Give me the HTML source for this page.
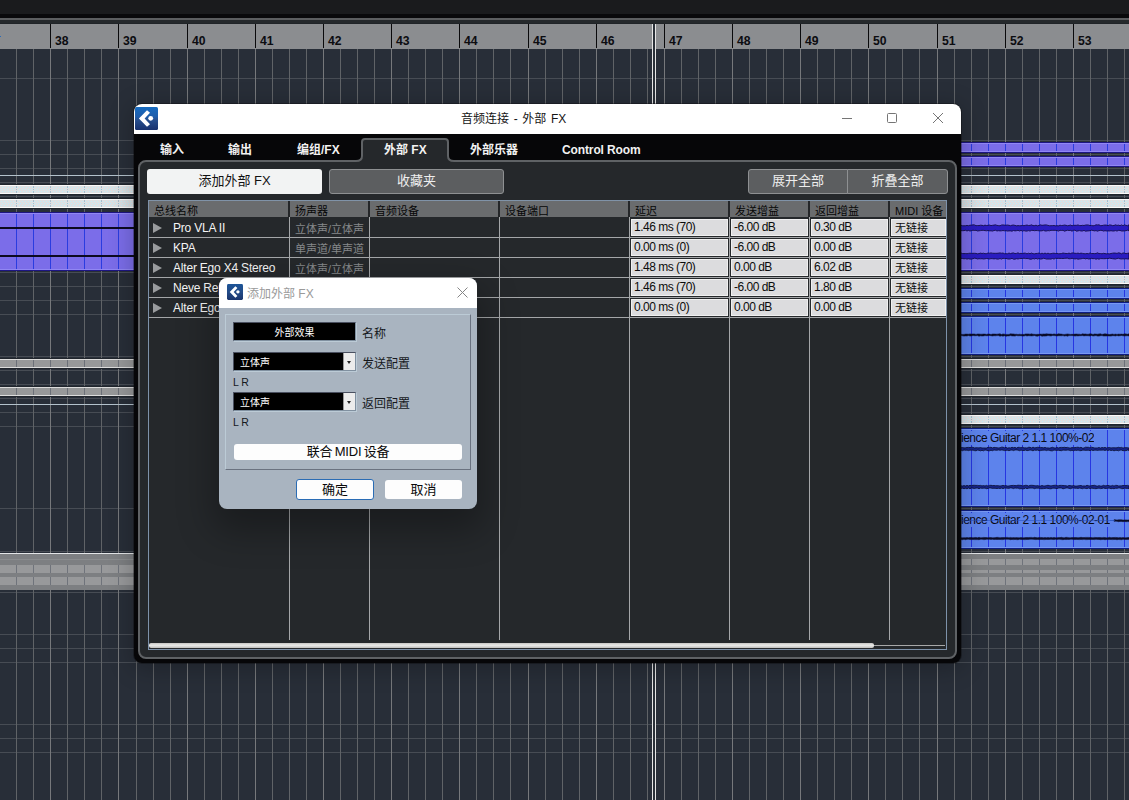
<!DOCTYPE html>
<html lang="zh-CN"><head><meta charset="utf-8"><title>音频连接 - 外部 FX</title>
<style>
html,body{margin:0;padding:0;background:#282e38;}
body{width:1129px;height:800px;overflow:hidden;position:relative;font-family:"Liberation Sans","Noto Sans CJK SC",sans-serif;}
.bg{position:absolute;left:0;top:0;display:block}
.rl{position:absolute;top:34px;font-size:12.2px;font-weight:bold;color:#0c0c10;line-height:14px;letter-spacing:0px}
.cliptxt{position:absolute;font-size:12px;color:#0a0a14;white-space:nowrap;line-height:14px;overflow:hidden;letter-spacing:-0.5px;background:#5d83ec}
#dlg{position:absolute;left:134px;top:104px;width:827px;height:559px;background:#060608;border-radius:8px;overflow:hidden;box-shadow:0 4px 24px 2px rgba(0,0,0,.24),0 0 0 1px rgba(10,10,12,.35)}
#dlg .tb{position:absolute;left:0;top:0;right:0;height:30px;background:#fff}
#dlg .title{position:absolute;left:327px;top:7px;word-spacing:1.3px;font-size:12px;line-height:16px;color:#151515;white-space:nowrap}
.logo{position:absolute}
.tab{position:absolute;top:39px;font-size:12px;font-weight:bold;color:#f2f2f2;line-height:14px;white-space:nowrap}
#panel{position:absolute;left:4px;top:56px;width:815px;height:495px;border:2px solid #5f6265;border-radius:8px;background:#25282b}
#atab{position:absolute;left:227px;top:34px;width:84px;height:26px;border:2px solid #45494d;border-bottom:none;border-radius:6px 6px 0 0;background:#25282b}
.btn{position:absolute;top:65px;height:25px;box-sizing:border-box;font-size:13px;line-height:24px;text-align:center;border-radius:3px;white-space:nowrap}
.btn.l{background:#f2f3f3;color:#111}
.btn.d{background:#5c5e60;color:#eee;border:1px solid #8e9092;line-height:22px}
.thead{position:absolute;background:#6a6c6e;border-top:1px solid #8093a8;box-sizing:border-box}
.th{position:absolute;font-size:11px;line-height:15px;color:#060606;white-space:nowrap}
.vsep{position:absolute;width:1px;background:#a4a6a8}
.hvsep{position:absolute;width:2px;height:16px;background:#242628}
.hsep{position:absolute;height:1px;background:#a4a6a8}
.tri{position:absolute;width:0;height:0;border-left:9px solid #9a9c9e;border-top:5px solid transparent;border-bottom:5px solid transparent}
.nm{position:absolute;font-size:12px;line-height:20px;color:#f4f4f4;white-space:nowrap;letter-spacing:-0.2px}
.spk{position:absolute;font-size:11px;line-height:20px;color:#86888a;white-space:nowrap}
.cell{position:absolute;height:17px;box-sizing:border-box;background:#dcdcde;border:1px solid #f0f0f0;font-size:12px;line-height:15px;color:#0c0c0c;padding-left:2px;letter-spacing:-0.5px;white-space:nowrap;overflow:hidden}
.cell.cj{font-size:11px;line-height:17px;letter-spacing:0;padding-left:3px}
#sb{position:absolute;left:15px;top:539px;width:725px;height:5px;background:linear-gradient(#c6c4c2,#eaeae8 45%,#e4e4e2 55%,#c0bebc);border-radius:2px}
#sbl{position:absolute;left:740px;top:541px;width:71px;height:1px;background:#a8a8a8}
#tframe{position:absolute;left:14px;top:96px;width:799px;height:450px;border:1px solid #7e92aa;border-top:none;box-sizing:border-box;pointer-events:none}
#sd{position:absolute;left:219px;top:278px;width:258px;height:231px;background:#a9b4c0;border-radius:8px;overflow:hidden;box-shadow:0 16px 36px 6px rgba(0,0,0,.30)}
#sd .tb{position:absolute;left:0;top:0;right:0;height:30px;background:#fff}
#sd .title{position:absolute;left:28px;top:7.5px;font-size:12px;line-height:16px;color:#9a9a9a;white-space:nowrap}
#grp{position:absolute;left:6px;top:36px;width:246px;height:156px;border:1px solid #bccbd6;border-right-color:#6a7280;border-bottom-color:#6a7280;box-sizing:border-box}
.fld{position:absolute;left:14px;width:123px;height:19px;background:#000;box-sizing:border-box;border:1px solid #4a5060;border-right-color:#8090a0;border-bottom-color:#8090a0;box-shadow:1px 1px 0 #bccbd6;color:#fff;font-size:10px;line-height:19px;white-space:nowrap}
.lab{position:absolute;left:143px;font-size:12px;line-height:16px;color:#15181c;white-space:nowrap}
.lr{position:absolute;left:14px;font-size:10.5px;line-height:12px;color:#15181c;white-space:nowrap}
.dd{position:absolute;right:0;top:0;width:11px;height:17px;background:#ececec;border-left:1px solid #999}
.dd:after{content:"";position:absolute;left:3px;top:8px;border-top:3px solid #222;border-left:2.5px solid transparent;border-right:2.5px solid transparent}
.wb{position:absolute;background:#fdfdfd;border-radius:3px;box-sizing:border-box;font-size:13px;color:#0a0a0a;text-align:center;white-space:nowrap}
</style></head><body>
<svg class="bg" width="1129" height="800" viewBox="0 0 1129 800" shape-rendering="crispEdges"><rect width="1129" height="800" fill="#282e38"/><path d="M0 78.5H1129M0 140.5H1129M0 154.5H1129M0 168.5H1129M0 182.5H1129M0 196.5H1129M0 272.5H1129M0 286.5H1129M0 300.5H1129M0 314.5H1129M0 356.5H1129M0 370.5H1129M0 384.5H1129M0 398.5H1129M0 412.5H1129M0 426.5H1129M0 508.5H1129M0 551.5H1129M0 592.5H1129M0 634.5H1129M0 648.5H1129M0 662.5H1129M0 724.5H1129M0 738.5H1129M0 752.5H1129" stroke="#474c54" stroke-width="1" fill="none"/><path d="M16.5 49V800M33.5 49V800M50.5 49V800M67.5 49V800M84.5 49V800M101.5 49V800M118.5 49V800M136.5 49V800M153.5 49V800M170.5 49V800M187.5 49V800M204.5 49V800M221.5 49V800M238.5 49V800M255.5 49V800M272.5 49V800M289.5 49V800M306.5 49V800M323.5 49V800M340.5 49V800M357.5 49V800M374.5 49V800M391.5 49V800M408.5 49V800M425.5 49V800M442.5 49V800M459.5 49V800M476.5 49V800M493.5 49V800M510.5 49V800M528.5 49V800M545.5 49V800M562.5 49V800M579.5 49V800M596.5 49V800M613.5 49V800M630.5 49V800M647.5 49V800M664.5 49V800M681.5 49V800M698.5 49V800M715.5 49V800M732.5 49V800M749.5 49V800M766.5 49V800M783.5 49V800M800.5 49V800M817.5 49V800M834.5 49V800M851.5 49V800M868.5 49V800M885.5 49V800M902.5 49V800M919.5 49V800M937.5 49V800M954.5 49V800M971.5 49V800M988.5 49V800M1005.5 49V800M1022.5 49V800M1039.5 49V800M1056.5 49V800M1073.5 49V800M1090.5 49V800M1107.5 49V800M1124.5 49V800" stroke="#606367" stroke-width="1" fill="none"/><path d="M50.5 49V800M118.5 49V800M187.5 49V800M255.5 49V800M323.5 49V800M391.5 49V800M459.5 49V800M528.5 49V800M596.5 49V800M664.5 49V800M732.5 49V800M800.5 49V800M868.5 49V800M937.5 49V800M1005.5 49V800M1073.5 49V800" stroke="#76787b" stroke-width="1" fill="none"/><path d="M0 175.5H1129M0 404.5H1129" stroke="#b4c2cc" stroke-width="1" fill="none"/><path d="M0 553.5H1129" stroke="#e4e6e8" stroke-width="1" fill="none"/><defs><pattern id="dots" width="6" height="4" patternUnits="userSpaceOnUse"><rect x="1" y="1" width="1" height="1" fill="#c2eef8"/><rect x="4" y="1" width="1" height="1" fill="#c2eef8"/><rect x="2" y="3" width="1" height="1" fill="#c2eef8"/><rect x="5" y="3" width="1" height="1" fill="#c2eef8"/></pattern></defs><rect x="0" y="184" width="1129" height="11" fill="#20252c"/><rect x="0" y="185" width="1129" height="9" fill="#fbfbfb"/><rect x="0" y="186" width="1129" height="7" fill="#dfe0e2"/><rect x="0" y="186" width="1129" height="7" fill="url(#dots)"/><path d="M16.5 186V193M33.5 186V193M50.5 186V193M67.5 186V193M84.5 186V193M101.5 186V193M118.5 186V193M136.5 186V193M153.5 186V193M170.5 186V193M187.5 186V193M204.5 186V193M221.5 186V193M238.5 186V193M255.5 186V193M272.5 186V193M289.5 186V193M306.5 186V193M323.5 186V193M340.5 186V193M357.5 186V193M374.5 186V193M391.5 186V193M408.5 186V193M425.5 186V193M442.5 186V193M459.5 186V193M476.5 186V193M493.5 186V193M510.5 186V193M528.5 186V193M545.5 186V193M562.5 186V193M579.5 186V193M596.5 186V193M613.5 186V193M630.5 186V193M647.5 186V193M664.5 186V193M681.5 186V193M698.5 186V193M715.5 186V193M732.5 186V193M749.5 186V193M766.5 186V193M783.5 186V193M800.5 186V193M817.5 186V193M834.5 186V193M851.5 186V193M868.5 186V193M885.5 186V193M902.5 186V193M919.5 186V193M937.5 186V193M954.5 186V193M971.5 186V193M988.5 186V193M1005.5 186V193M1022.5 186V193M1039.5 186V193M1056.5 186V193M1073.5 186V193M1090.5 186V193M1107.5 186V193M1124.5 186V193" stroke="#a9bccb" stroke-width="1" fill="none" stroke-dasharray="1.5 1"/><rect x="0" y="198" width="1129" height="11" fill="#20252c"/><rect x="0" y="199" width="1129" height="9" fill="#fbfbfb"/><rect x="0" y="200" width="1129" height="7" fill="#dfe0e2"/><rect x="0" y="200" width="1129" height="7" fill="url(#dots)"/><path d="M16.5 200V207M33.5 200V207M50.5 200V207M67.5 200V207M84.5 200V207M101.5 200V207M118.5 200V207M136.5 200V207M153.5 200V207M170.5 200V207M187.5 200V207M204.5 200V207M221.5 200V207M238.5 200V207M255.5 200V207M272.5 200V207M289.5 200V207M306.5 200V207M323.5 200V207M340.5 200V207M357.5 200V207M374.5 200V207M391.5 200V207M408.5 200V207M425.5 200V207M442.5 200V207M459.5 200V207M476.5 200V207M493.5 200V207M510.5 200V207M528.5 200V207M545.5 200V207M562.5 200V207M579.5 200V207M596.5 200V207M613.5 200V207M630.5 200V207M647.5 200V207M664.5 200V207M681.5 200V207M698.5 200V207M715.5 200V207M732.5 200V207M749.5 200V207M766.5 200V207M783.5 200V207M800.5 200V207M817.5 200V207M834.5 200V207M851.5 200V207M868.5 200V207M885.5 200V207M902.5 200V207M919.5 200V207M937.5 200V207M954.5 200V207M971.5 200V207M988.5 200V207M1005.5 200V207M1022.5 200V207M1039.5 200V207M1056.5 200V207M1073.5 200V207M1090.5 200V207M1107.5 200V207M1124.5 200V207" stroke="#a9bccb" stroke-width="1" fill="none" stroke-dasharray="1.5 1"/><rect x="0" y="212" width="1129" height="59" fill="#1e1684"/><rect x="0" y="213" width="1129" height="57" fill="#9187f3"/><rect x="0" y="214" width="1129" height="55" fill="#7b6de9"/><path d="M16.5 214V269M33.5 214V269M50.5 214V269M67.5 214V269M84.5 214V269M101.5 214V269M118.5 214V269M136.5 214V269M153.5 214V269M170.5 214V269M187.5 214V269M204.5 214V269M221.5 214V269M238.5 214V269M255.5 214V269M272.5 214V269M289.5 214V269M306.5 214V269M323.5 214V269M340.5 214V269M357.5 214V269M374.5 214V269M391.5 214V269M408.5 214V269M425.5 214V269M442.5 214V269M459.5 214V269M476.5 214V269M493.5 214V269M510.5 214V269M528.5 214V269M545.5 214V269M562.5 214V269M579.5 214V269M596.5 214V269M613.5 214V269M630.5 214V269M647.5 214V269M664.5 214V269M681.5 214V269M698.5 214V269M715.5 214V269M732.5 214V269M749.5 214V269M766.5 214V269M783.5 214V269M800.5 214V269M817.5 214V269M834.5 214V269M851.5 214V269M868.5 214V269M885.5 214V269M902.5 214V269M919.5 214V269M937.5 214V269M954.5 214V269M971.5 214V269M988.5 214V269M1005.5 214V269M1022.5 214V269M1039.5 214V269M1056.5 214V269M1073.5 214V269M1090.5 214V269M1107.5 214V269M1124.5 214V269" stroke="#2a3ce0" stroke-width="1" fill="none"/><rect x="0" y="227" width="500" height="2" fill="#0c0a20"/><rect x="0" y="255" width="500" height="2" fill="#0c0a20"/><path d="M958.0 225.5 L959.5 225.1 L961.0 225.3 L962.5 225.7 L964.0 225.8 L965.5 225.7 L967.0 225.4 L968.5 225.7 L970.0 225.2 L971.5 225.2 L973.0 224.8 L974.5 224.9 L976.0 225.7 L977.5 225.5 L979.0 225.6 L980.5 225.2 L982.0 225.3 L983.5 225.7 L985.0 225.1 L986.5 225.5 L988.0 225.3 L989.5 225.0 L991.0 225.6 L992.5 225.3 L994.0 225.1 L995.5 224.8 L997.0 225.4 L998.5 225.6 L1000.0 225.8 L1001.5 225.0 L1003.0 224.9 L1004.5 225.1 L1006.0 225.2 L1007.5 225.0 L1009.0 225.3 L1010.5 225.7 L1012.0 225.2 L1013.5 225.0 L1015.0 225.4 L1016.5 225.8 L1018.0 225.6 L1019.5 225.7 L1021.0 225.7 L1022.5 225.4 L1024.0 225.7 L1025.5 225.3 L1027.0 225.0 L1028.5 225.5 L1030.0 225.4 L1031.5 224.8 L1033.0 225.6 L1034.5 225.6 L1036.0 225.2 L1037.5 225.8 L1039.0 225.4 L1040.5 224.8 L1042.0 225.3 L1043.5 225.1 L1045.0 224.9 L1046.5 224.9 L1048.0 225.4 L1049.5 225.7 L1051.0 225.7 L1052.5 225.6 L1054.0 225.5 L1055.5 225.8 L1057.0 225.7 L1058.5 225.8 L1060.0 225.2 L1061.5 225.5 L1063.0 225.4 L1064.5 225.0 L1066.0 225.3 L1067.5 225.7 L1069.0 225.5 L1070.5 225.0 L1072.0 225.8 L1073.5 225.3 L1075.0 225.3 L1076.5 225.3 L1078.0 224.9 L1079.5 225.5 L1081.0 225.6 L1082.5 225.3 L1084.0 225.5 L1085.5 225.0 L1087.0 224.9 L1088.5 225.0 L1090.0 225.6 L1091.5 225.4 L1093.0 225.8 L1094.5 225.5 L1096.0 224.8 L1097.5 224.9 L1099.0 224.8 L1100.5 225.6 L1102.0 225.6 L1103.5 225.2 L1105.0 225.0 L1106.5 225.1 L1108.0 225.7 L1109.5 224.9 L1111.0 225.0 L1112.5 225.6 L1114.0 225.5 L1115.5 224.8 L1117.0 225.4 L1118.5 225.1 L1120.0 225.7 L1121.5 224.9 L1123.0 225.7 L1124.5 224.8 L1126.0 225.4 L1127.5 225.7 L1129.0 224.8 L1129.0 230.8 L1127.5 230.2 L1126.0 230.7 L1124.5 230.9 L1123.0 231.0 L1121.5 231.0 L1120.0 230.4 L1118.5 230.4 L1117.0 231.1 L1115.5 230.6 L1114.0 231.0 L1112.5 231.0 L1111.0 230.7 L1109.5 231.0 L1108.0 230.9 L1106.5 231.0 L1105.0 230.7 L1103.5 231.1 L1102.0 230.4 L1100.5 230.4 L1099.0 230.6 L1097.5 231.2 L1096.0 230.6 L1094.5 230.9 L1093.0 230.5 L1091.5 230.2 L1090.0 230.7 L1088.5 230.9 L1087.0 231.0 L1085.5 231.2 L1084.0 230.4 L1082.5 231.0 L1081.0 231.0 L1079.5 230.6 L1078.0 230.9 L1076.5 231.2 L1075.0 230.2 L1073.5 230.3 L1072.0 231.2 L1070.5 230.4 L1069.0 230.5 L1067.5 230.3 L1066.0 230.7 L1064.5 231.2 L1063.0 230.3 L1061.5 230.5 L1060.0 230.3 L1058.5 231.1 L1057.0 230.6 L1055.5 230.4 L1054.0 230.3 L1052.5 230.4 L1051.0 230.3 L1049.5 230.8 L1048.0 230.6 L1046.5 231.0 L1045.0 231.0 L1043.5 230.3 L1042.0 230.8 L1040.5 230.9 L1039.0 230.8 L1037.5 230.6 L1036.0 230.5 L1034.5 230.7 L1033.0 230.4 L1031.5 230.4 L1030.0 231.1 L1028.5 230.6 L1027.0 231.1 L1025.5 231.1 L1024.0 230.6 L1022.5 231.1 L1021.0 230.4 L1019.5 231.0 L1018.0 230.3 L1016.5 230.7 L1015.0 230.9 L1013.5 230.5 L1012.0 231.2 L1010.5 230.9 L1009.0 230.9 L1007.5 231.1 L1006.0 230.7 L1004.5 230.8 L1003.0 230.5 L1001.5 230.8 L1000.0 230.9 L998.5 230.7 L997.0 231.0 L995.5 230.3 L994.0 230.5 L992.5 231.1 L991.0 230.8 L989.5 230.9 L988.0 230.5 L986.5 230.8 L985.0 230.6 L983.5 230.4 L982.0 230.3 L980.5 230.6 L979.0 230.8 L977.5 231.0 L976.0 230.3 L974.5 230.5 L973.0 230.2 L971.5 230.6 L970.0 231.1 L968.5 230.4 L967.0 231.0 L965.5 230.3 L964.0 230.6 L962.5 230.7 L961.0 230.6 L959.5 230.3 L958.0 230.4Z" fill="#2a1cc0" stroke="#0c0838" stroke-width="0.8" shape-rendering="auto"/><path d="M958.0 253.3 L959.5 253.4 L961.0 253.0 L962.5 253.5 L964.0 253.6 L965.5 253.5 L967.0 253.7 L968.5 253.4 L970.0 253.2 L971.5 253.4 L973.0 253.3 L974.5 253.3 L976.0 253.4 L977.5 253.8 L979.0 253.6 L980.5 253.1 L982.0 253.5 L983.5 253.2 L985.0 253.7 L986.5 253.6 L988.0 253.0 L989.5 253.2 L991.0 252.9 L992.5 253.2 L994.0 253.3 L995.5 253.3 L997.0 253.3 L998.5 253.1 L1000.0 252.9 L1001.5 253.2 L1003.0 253.0 L1004.5 253.7 L1006.0 253.7 L1007.5 253.7 L1009.0 253.0 L1010.5 253.6 L1012.0 253.1 L1013.5 252.9 L1015.0 253.6 L1016.5 253.4 L1018.0 252.8 L1019.5 253.6 L1021.0 253.3 L1022.5 253.6 L1024.0 253.1 L1025.5 253.2 L1027.0 253.8 L1028.5 253.2 L1030.0 253.7 L1031.5 253.0 L1033.0 253.7 L1034.5 253.8 L1036.0 253.5 L1037.5 253.4 L1039.0 253.0 L1040.5 253.7 L1042.0 253.2 L1043.5 253.7 L1045.0 253.1 L1046.5 253.7 L1048.0 253.2 L1049.5 253.7 L1051.0 253.7 L1052.5 253.3 L1054.0 253.2 L1055.5 253.5 L1057.0 253.3 L1058.5 253.7 L1060.0 253.7 L1061.5 253.5 L1063.0 253.0 L1064.5 253.3 L1066.0 253.5 L1067.5 253.5 L1069.0 253.1 L1070.5 253.6 L1072.0 252.9 L1073.5 253.0 L1075.0 253.3 L1076.5 253.4 L1078.0 253.1 L1079.5 253.5 L1081.0 253.1 L1082.5 253.4 L1084.0 253.7 L1085.5 253.7 L1087.0 253.5 L1088.5 253.7 L1090.0 252.9 L1091.5 253.5 L1093.0 253.5 L1094.5 253.6 L1096.0 253.5 L1097.5 252.8 L1099.0 253.6 L1100.5 253.5 L1102.0 253.8 L1103.5 253.3 L1105.0 253.6 L1106.5 253.8 L1108.0 253.7 L1109.5 253.8 L1111.0 253.5 L1112.5 253.2 L1114.0 253.0 L1115.5 253.1 L1117.0 253.4 L1118.5 252.8 L1120.0 253.1 L1121.5 253.8 L1123.0 252.9 L1124.5 253.1 L1126.0 253.7 L1127.5 253.3 L1129.0 253.0 L1129.0 259.0 L1127.5 259.0 L1126.0 258.7 L1124.5 259.0 L1123.0 258.8 L1121.5 259.0 L1120.0 258.8 L1118.5 258.3 L1117.0 258.5 L1115.5 259.1 L1114.0 258.9 L1112.5 258.7 L1111.0 258.4 L1109.5 258.2 L1108.0 258.6 L1106.5 258.5 L1105.0 258.7 L1103.5 258.7 L1102.0 258.6 L1100.5 258.6 L1099.0 259.2 L1097.5 258.7 L1096.0 259.2 L1094.5 258.6 L1093.0 258.7 L1091.5 258.4 L1090.0 258.9 L1088.5 259.0 L1087.0 258.4 L1085.5 258.9 L1084.0 258.3 L1082.5 258.5 L1081.0 258.8 L1079.5 259.0 L1078.0 259.2 L1076.5 258.7 L1075.0 259.0 L1073.5 258.6 L1072.0 258.3 L1070.5 258.7 L1069.0 258.8 L1067.5 258.2 L1066.0 258.2 L1064.5 258.4 L1063.0 258.5 L1061.5 258.5 L1060.0 258.4 L1058.5 258.4 L1057.0 258.4 L1055.5 258.3 L1054.0 259.1 L1052.5 258.5 L1051.0 259.1 L1049.5 259.1 L1048.0 259.0 L1046.5 259.1 L1045.0 258.6 L1043.5 258.3 L1042.0 258.9 L1040.5 259.1 L1039.0 258.5 L1037.5 259.1 L1036.0 258.3 L1034.5 259.0 L1033.0 258.5 L1031.5 259.2 L1030.0 259.2 L1028.5 258.7 L1027.0 258.5 L1025.5 258.6 L1024.0 258.2 L1022.5 258.5 L1021.0 258.5 L1019.5 258.6 L1018.0 259.0 L1016.5 258.7 L1015.0 259.2 L1013.5 259.2 L1012.0 258.3 L1010.5 258.9 L1009.0 259.1 L1007.5 258.9 L1006.0 258.4 L1004.5 258.6 L1003.0 258.3 L1001.5 259.1 L1000.0 258.5 L998.5 259.1 L997.0 259.1 L995.5 258.7 L994.0 258.9 L992.5 258.7 L991.0 258.6 L989.5 259.0 L988.0 258.7 L986.5 258.5 L985.0 258.8 L983.5 259.0 L982.0 258.7 L980.5 258.8 L979.0 258.7 L977.5 259.0 L976.0 258.4 L974.5 258.2 L973.0 258.7 L971.5 259.1 L970.0 259.1 L968.5 258.7 L967.0 259.1 L965.5 258.6 L964.0 258.8 L962.5 258.5 L961.0 258.4 L959.5 259.1 L958.0 259.1Z" fill="#2a1cc0" stroke="#0c0838" stroke-width="0.8" shape-rendering="auto"/><rect x="900" y="142" width="229" height="11" fill="#1e1684"/><rect x="900" y="143" width="229" height="9" fill="#9187f3"/><rect x="900" y="144" width="229" height="7" fill="#7b6de9"/><path d="M902.5 144V151M919.5 144V151M937.5 144V151M954.5 144V151M971.5 144V151M988.5 144V151M1005.5 144V151M1022.5 144V151M1039.5 144V151M1056.5 144V151M1073.5 144V151M1090.5 144V151M1107.5 144V151M1124.5 144V151" stroke="#2a3ce0" stroke-width="1" fill="none"/><rect x="900" y="156" width="229" height="11" fill="#1e1684"/><rect x="900" y="157" width="229" height="9" fill="#9187f3"/><rect x="900" y="158" width="229" height="7" fill="#7b6de9"/><path d="M902.5 158V165M919.5 158V165M937.5 158V165M954.5 158V165M971.5 158V165M988.5 158V165M1005.5 158V165M1022.5 158V165M1039.5 158V165M1056.5 158V165M1073.5 158V165M1090.5 158V165M1107.5 158V165M1124.5 158V165" stroke="#2a3ce0" stroke-width="1" fill="none"/><rect x="900" y="274" width="229" height="11" fill="#20252c"/><rect x="900" y="275" width="229" height="9" fill="#fbfbfb"/><rect x="900" y="276" width="229" height="7" fill="#dfe0e2"/><rect x="900" y="276" width="229" height="7" fill="url(#dots)"/><path d="M902.5 276V283M919.5 276V283M937.5 276V283M954.5 276V283M971.5 276V283M988.5 276V283M1005.5 276V283M1022.5 276V283M1039.5 276V283M1056.5 276V283M1073.5 276V283M1090.5 276V283M1107.5 276V283M1124.5 276V283" stroke="#a9bccb" stroke-width="1" fill="none" stroke-dasharray="1.5 1"/><rect x="900" y="414" width="229" height="11" fill="#20252c"/><rect x="900" y="415" width="229" height="9" fill="#fbfbfb"/><rect x="900" y="416" width="229" height="7" fill="#dfe0e2"/><rect x="900" y="416" width="229" height="7" fill="url(#dots)"/><path d="M902.5 416V423M919.5 416V423M937.5 416V423M954.5 416V423M971.5 416V423M988.5 416V423M1005.5 416V423M1022.5 416V423M1039.5 416V423M1056.5 416V423M1073.5 416V423M1090.5 416V423M1107.5 416V423M1124.5 416V423" stroke="#a9bccb" stroke-width="1" fill="none" stroke-dasharray="1.5 1"/><rect x="900" y="288" width="229" height="11" fill="#0e1e84"/><rect x="900" y="289" width="229" height="9" fill="#7898f3"/><rect x="900" y="290" width="229" height="7" fill="#5d83ec"/><path d="M902.5 290V297M919.5 290V297M937.5 290V297M954.5 290V297M971.5 290V297M988.5 290V297M1005.5 290V297M1022.5 290V297M1039.5 290V297M1056.5 290V297M1073.5 290V297M1090.5 290V297M1107.5 290V297M1124.5 290V297" stroke="#2636e2" stroke-width="1" fill="none"/><rect x="900" y="302" width="229" height="11" fill="#0e1e84"/><rect x="900" y="303" width="229" height="9" fill="#7898f3"/><rect x="900" y="304" width="229" height="7" fill="#5d83ec"/><path d="M902.5 304V311M919.5 304V311M937.5 304V311M954.5 304V311M971.5 304V311M988.5 304V311M1005.5 304V311M1022.5 304V311M1039.5 304V311M1056.5 304V311M1073.5 304V311M1090.5 304V311M1107.5 304V311M1124.5 304V311" stroke="#2636e2" stroke-width="1" fill="none"/><rect x="900" y="316" width="229" height="39" fill="#0e1e84"/><rect x="900" y="317" width="229" height="37" fill="#7898f3"/><rect x="900" y="318" width="229" height="35" fill="#5d83ec"/><path d="M902.5 318V353M919.5 318V353M937.5 318V353M954.5 318V353M971.5 318V353M988.5 318V353M1005.5 318V353M1022.5 318V353M1039.5 318V353M1056.5 318V353M1073.5 318V353M1090.5 318V353M1107.5 318V353M1124.5 318V353" stroke="#2636e2" stroke-width="1" fill="none"/><rect x="900" y="428" width="229" height="79" fill="#0e1e84"/><rect x="900" y="429" width="229" height="77" fill="#7898f3"/><rect x="900" y="430" width="229" height="75" fill="#5d83ec"/><path d="M902.5 430V505M919.5 430V505M937.5 430V505M954.5 430V505M971.5 430V505M988.5 430V505M1005.5 430V505M1022.5 430V505M1039.5 430V505M1056.5 430V505M1073.5 430V505M1090.5 430V505M1107.5 430V505M1124.5 430V505" stroke="#2636e2" stroke-width="1" fill="none"/><rect x="900" y="510" width="229" height="39" fill="#0e1e84"/><rect x="900" y="511" width="229" height="37" fill="#7898f3"/><rect x="900" y="512" width="229" height="35" fill="#5d83ec"/><path d="M902.5 512V547M919.5 512V547M937.5 512V547M954.5 512V547M971.5 512V547M988.5 512V547M1005.5 512V547M1022.5 512V547M1039.5 512V547M1056.5 512V547M1073.5 512V547M1090.5 512V547M1107.5 512V547M1124.5 512V547" stroke="#2636e2" stroke-width="1" fill="none"/><path d="M958.0 334.1 L959.5 334.0 L961.0 334.3 L962.5 334.4 L964.0 334.4 L965.5 334.1 L967.0 334.1 L968.5 334.2 L970.0 333.9 L971.5 334.1 L973.0 334.0 L974.5 334.0 L976.0 334.4 L977.5 334.0 L979.0 334.0 L980.5 334.2 L982.0 334.2 L983.5 334.0 L985.0 334.1 L986.5 334.4 L988.0 334.0 L989.5 334.1 L991.0 334.5 L992.5 334.0 L994.0 334.0 L995.5 334.1 L997.0 334.2 L998.5 333.9 L1000.0 333.8 L1001.5 334.5 L1003.0 333.9 L1004.5 334.2 L1006.0 334.4 L1007.5 334.4 L1009.0 334.4 L1010.5 333.8 L1012.0 333.9 L1013.5 333.9 L1015.0 334.3 L1016.5 334.2 L1018.0 334.5 L1019.5 334.2 L1021.0 334.4 L1022.5 334.3 L1024.0 334.5 L1025.5 333.9 L1027.0 333.9 L1028.5 333.9 L1030.0 334.2 L1031.5 333.8 L1033.0 334.2 L1034.5 334.3 L1036.0 334.4 L1037.5 334.3 L1039.0 334.3 L1040.5 334.1 L1042.0 334.2 L1043.5 333.9 L1045.0 334.1 L1046.5 333.8 L1048.0 334.0 L1049.5 334.0 L1051.0 334.0 L1052.5 334.3 L1054.0 333.9 L1055.5 334.2 L1057.0 334.3 L1058.5 333.8 L1060.0 334.0 L1061.5 334.1 L1063.0 334.4 L1064.5 334.4 L1066.0 334.2 L1067.5 333.9 L1069.0 334.2 L1070.5 334.4 L1072.0 334.3 L1073.5 334.3 L1075.0 334.1 L1076.5 334.0 L1078.0 334.2 L1079.5 334.2 L1081.0 334.5 L1082.5 333.8 L1084.0 334.1 L1085.5 333.9 L1087.0 334.3 L1088.5 334.2 L1090.0 333.8 L1091.5 333.9 L1093.0 334.5 L1094.5 333.9 L1096.0 334.1 L1097.5 334.2 L1099.0 333.9 L1100.5 333.8 L1102.0 334.4 L1103.5 334.1 L1105.0 333.8 L1106.5 334.0 L1108.0 334.2 L1109.5 334.5 L1111.0 334.3 L1112.5 334.0 L1114.0 334.4 L1115.5 334.1 L1117.0 334.4 L1118.5 334.1 L1120.0 334.2 L1121.5 334.1 L1123.0 334.3 L1124.5 333.8 L1126.0 333.9 L1127.5 334.3 L1129.0 333.8 L1129.0 336.0 L1127.5 335.7 L1126.0 335.8 L1124.5 336.0 L1123.0 335.8 L1121.5 335.5 L1120.0 335.7 L1118.5 335.9 L1117.0 335.5 L1115.5 336.0 L1114.0 335.7 L1112.5 335.7 L1111.0 336.1 L1109.5 336.0 L1108.0 335.9 L1106.5 336.0 L1105.0 336.0 L1103.5 336.0 L1102.0 335.6 L1100.5 335.7 L1099.0 336.1 L1097.5 336.1 L1096.0 335.5 L1094.5 335.8 L1093.0 336.0 L1091.5 335.5 L1090.0 336.1 L1088.5 335.8 L1087.0 335.7 L1085.5 335.7 L1084.0 335.9 L1082.5 335.6 L1081.0 335.7 L1079.5 335.7 L1078.0 335.9 L1076.5 335.8 L1075.0 336.1 L1073.5 335.7 L1072.0 335.6 L1070.5 335.6 L1069.0 335.6 L1067.5 336.2 L1066.0 335.7 L1064.5 336.1 L1063.0 335.6 L1061.5 335.8 L1060.0 335.7 L1058.5 335.7 L1057.0 336.0 L1055.5 335.7 L1054.0 335.6 L1052.5 335.5 L1051.0 336.0 L1049.5 335.8 L1048.0 335.5 L1046.5 335.9 L1045.0 336.1 L1043.5 336.1 L1042.0 336.2 L1040.5 335.6 L1039.0 335.7 L1037.5 336.2 L1036.0 336.1 L1034.5 335.5 L1033.0 335.8 L1031.5 335.9 L1030.0 335.8 L1028.5 335.7 L1027.0 336.0 L1025.5 335.6 L1024.0 336.0 L1022.5 336.1 L1021.0 335.7 L1019.5 335.7 L1018.0 335.8 L1016.5 335.5 L1015.0 336.1 L1013.5 336.0 L1012.0 335.9 L1010.5 335.6 L1009.0 335.9 L1007.5 335.9 L1006.0 336.2 L1004.5 335.7 L1003.0 336.2 L1001.5 335.8 L1000.0 336.2 L998.5 335.6 L997.0 335.6 L995.5 335.8 L994.0 335.7 L992.5 336.0 L991.0 335.7 L989.5 335.5 L988.0 335.7 L986.5 335.7 L985.0 335.6 L983.5 335.9 L982.0 336.0 L980.5 335.8 L979.0 336.2 L977.5 335.6 L976.0 335.7 L974.5 335.7 L973.0 335.5 L971.5 335.9 L970.0 336.0 L968.5 335.5 L967.0 336.0 L965.5 335.9 L964.0 336.1 L962.5 335.8 L961.0 335.5 L959.5 336.0 L958.0 336.1Z" fill="#0a0c28" stroke="#0a0c28" stroke-width="0.5" shape-rendering="auto"/><path d="M958.0 447.8 L959.5 447.7 L961.0 447.7 L962.5 447.5 L964.0 447.9 L965.5 447.8 L967.0 447.5 L968.5 447.4 L970.0 447.6 L971.5 447.2 L973.0 447.4 L974.5 447.9 L976.0 447.8 L977.5 447.7 L979.0 447.9 L980.5 447.5 L982.0 448.0 L983.5 447.9 L985.0 448.0 L986.5 448.0 L988.0 447.3 L989.5 447.4 L991.0 447.3 L992.5 447.9 L994.0 447.4 L995.5 447.5 L997.0 447.8 L998.5 447.9 L1000.0 447.8 L1001.5 447.2 L1003.0 447.2 L1004.5 447.8 L1006.0 447.4 L1007.5 448.1 L1009.0 447.8 L1010.5 447.9 L1012.0 447.3 L1013.5 447.7 L1015.0 447.4 L1016.5 448.1 L1018.0 447.3 L1019.5 447.4 L1021.0 447.8 L1022.5 447.2 L1024.0 447.9 L1025.5 447.8 L1027.0 448.1 L1028.5 447.3 L1030.0 447.3 L1031.5 447.9 L1033.0 447.2 L1034.5 447.8 L1036.0 447.7 L1037.5 447.3 L1039.0 447.4 L1040.5 447.4 L1042.0 447.6 L1043.5 447.8 L1045.0 447.4 L1046.5 447.9 L1048.0 447.9 L1049.5 448.1 L1051.0 447.8 L1052.5 447.3 L1054.0 447.9 L1055.5 448.0 L1057.0 447.5 L1058.5 447.9 L1060.0 447.5 L1061.5 447.4 L1063.0 447.5 L1064.5 447.3 L1066.0 447.6 L1067.5 447.4 L1069.0 447.9 L1070.5 448.0 L1072.0 447.6 L1073.5 447.7 L1075.0 447.6 L1076.5 447.4 L1078.0 447.2 L1079.5 447.7 L1081.0 447.3 L1082.5 448.1 L1084.0 448.0 L1085.5 447.2 L1087.0 447.3 L1088.5 447.3 L1090.0 447.9 L1091.5 447.2 L1093.0 447.6 L1094.5 447.9 L1096.0 448.0 L1097.5 447.9 L1099.0 447.5 L1100.5 448.1 L1102.0 447.5 L1103.5 447.8 L1105.0 447.4 L1106.5 448.0 L1108.0 447.7 L1109.5 447.5 L1111.0 448.0 L1112.5 447.7 L1114.0 447.8 L1115.5 447.8 L1117.0 447.8 L1118.5 447.3 L1120.0 447.8 L1121.5 447.4 L1123.0 448.1 L1124.5 447.7 L1126.0 447.7 L1127.5 447.7 L1129.0 448.1 L1129.0 450.4 L1127.5 450.0 L1126.0 450.7 L1124.5 450.6 L1123.0 450.7 L1121.5 450.1 L1120.0 450.1 L1118.5 450.8 L1117.0 450.3 L1115.5 450.4 L1114.0 450.8 L1112.5 450.2 L1111.0 450.5 L1109.5 450.0 L1108.0 450.4 L1106.5 450.0 L1105.0 450.4 L1103.5 450.1 L1102.0 450.1 L1100.5 450.2 L1099.0 450.1 L1097.5 450.4 L1096.0 450.1 L1094.5 450.2 L1093.0 450.5 L1091.5 450.0 L1090.0 450.6 L1088.5 450.3 L1087.0 450.2 L1085.5 450.4 L1084.0 450.1 L1082.5 450.2 L1081.0 450.7 L1079.5 450.6 L1078.0 450.0 L1076.5 450.5 L1075.0 450.1 L1073.5 450.8 L1072.0 450.2 L1070.5 450.7 L1069.0 450.1 L1067.5 450.1 L1066.0 450.2 L1064.5 450.2 L1063.0 450.0 L1061.5 450.7 L1060.0 450.5 L1058.5 450.3 L1057.0 450.3 L1055.5 450.3 L1054.0 450.0 L1052.5 450.8 L1051.0 450.8 L1049.5 450.4 L1048.0 450.0 L1046.5 450.6 L1045.0 450.0 L1043.5 450.2 L1042.0 450.2 L1040.5 450.6 L1039.0 450.6 L1037.5 450.1 L1036.0 450.3 L1034.5 450.1 L1033.0 450.8 L1031.5 450.3 L1030.0 449.9 L1028.5 450.5 L1027.0 450.6 L1025.5 450.1 L1024.0 450.5 L1022.5 450.5 L1021.0 450.1 L1019.5 450.7 L1018.0 450.1 L1016.5 450.0 L1015.0 449.9 L1013.5 450.6 L1012.0 449.9 L1010.5 450.2 L1009.0 450.7 L1007.5 450.3 L1006.0 450.3 L1004.5 450.6 L1003.0 450.1 L1001.5 450.0 L1000.0 450.2 L998.5 449.9 L997.0 450.2 L995.5 450.2 L994.0 449.9 L992.5 450.7 L991.0 450.2 L989.5 450.8 L988.0 450.7 L986.5 450.3 L985.0 449.9 L983.5 450.8 L982.0 450.3 L980.5 450.8 L979.0 450.3 L977.5 450.1 L976.0 450.8 L974.5 450.6 L973.0 450.1 L971.5 450.2 L970.0 450.1 L968.5 450.6 L967.0 450.1 L965.5 450.3 L964.0 449.9 L962.5 450.7 L961.0 450.1 L959.5 450.5 L958.0 449.9Z" fill="#16248a" stroke="#0a0e30" stroke-width="0.8" shape-rendering="auto"/><path d="M958.0 485.5 L959.5 486.0 L961.0 485.8 L962.5 486.0 L964.0 485.6 L965.5 486.0 L967.0 485.4 L968.5 485.9 L970.0 485.3 L971.5 485.7 L973.0 485.3 L974.5 485.3 L976.0 485.4 L977.5 485.4 L979.0 485.7 L980.5 485.4 L982.0 485.9 L983.5 485.6 L985.0 486.0 L986.5 485.4 L988.0 486.1 L989.5 485.4 L991.0 485.3 L992.5 485.6 L994.0 485.5 L995.5 485.7 L997.0 485.7 L998.5 485.7 L1000.0 486.1 L1001.5 485.7 L1003.0 485.4 L1004.5 485.7 L1006.0 485.7 L1007.5 486.0 L1009.0 486.0 L1010.5 485.6 L1012.0 485.5 L1013.5 485.4 L1015.0 485.6 L1016.5 485.6 L1018.0 485.2 L1019.5 485.3 L1021.0 485.4 L1022.5 485.9 L1024.0 485.7 L1025.5 485.3 L1027.0 485.4 L1028.5 486.0 L1030.0 485.4 L1031.5 485.3 L1033.0 485.4 L1034.5 485.6 L1036.0 485.9 L1037.5 485.6 L1039.0 486.1 L1040.5 486.0 L1042.0 485.5 L1043.5 485.9 L1045.0 486.0 L1046.5 485.5 L1048.0 485.3 L1049.5 485.6 L1051.0 486.0 L1052.5 485.5 L1054.0 485.4 L1055.5 485.2 L1057.0 485.8 L1058.5 485.7 L1060.0 485.4 L1061.5 485.4 L1063.0 485.5 L1064.5 485.6 L1066.0 485.8 L1067.5 486.1 L1069.0 485.5 L1070.5 485.6 L1072.0 486.0 L1073.5 485.5 L1075.0 486.1 L1076.5 486.0 L1078.0 485.9 L1079.5 485.6 L1081.0 485.5 L1082.5 486.0 L1084.0 485.9 L1085.5 486.0 L1087.0 485.3 L1088.5 485.7 L1090.0 486.1 L1091.5 485.6 L1093.0 485.5 L1094.5 485.3 L1096.0 485.9 L1097.5 486.1 L1099.0 485.7 L1100.5 486.0 L1102.0 486.1 L1103.5 485.3 L1105.0 485.9 L1106.5 485.6 L1108.0 485.4 L1109.5 485.8 L1111.0 486.1 L1112.5 485.4 L1114.0 486.1 L1115.5 485.4 L1117.0 485.4 L1118.5 485.9 L1120.0 485.9 L1121.5 485.8 L1123.0 485.5 L1124.5 485.5 L1126.0 485.6 L1127.5 485.4 L1129.0 485.9 L1129.0 488.5 L1127.5 488.4 L1126.0 488.3 L1124.5 488.1 L1123.0 488.7 L1121.5 488.6 L1120.0 487.9 L1118.5 488.0 L1117.0 488.3 L1115.5 488.3 L1114.0 488.7 L1112.5 488.5 L1111.0 488.7 L1109.5 488.2 L1108.0 488.1 L1106.5 488.5 L1105.0 488.4 L1103.5 488.0 L1102.0 488.4 L1100.5 488.6 L1099.0 488.1 L1097.5 488.4 L1096.0 488.7 L1094.5 488.6 L1093.0 488.3 L1091.5 488.2 L1090.0 488.5 L1088.5 488.1 L1087.0 488.6 L1085.5 488.5 L1084.0 488.0 L1082.5 488.7 L1081.0 488.3 L1079.5 488.1 L1078.0 488.4 L1076.5 488.2 L1075.0 488.2 L1073.5 487.9 L1072.0 488.1 L1070.5 488.7 L1069.0 488.3 L1067.5 488.0 L1066.0 487.9 L1064.5 488.5 L1063.0 488.8 L1061.5 488.1 L1060.0 487.9 L1058.5 488.1 L1057.0 488.6 L1055.5 488.4 L1054.0 488.1 L1052.5 488.3 L1051.0 488.8 L1049.5 488.7 L1048.0 488.4 L1046.5 488.2 L1045.0 488.4 L1043.5 488.6 L1042.0 488.7 L1040.5 488.7 L1039.0 488.1 L1037.5 488.2 L1036.0 488.1 L1034.5 488.7 L1033.0 488.0 L1031.5 488.1 L1030.0 488.0 L1028.5 488.2 L1027.0 488.7 L1025.5 488.0 L1024.0 488.8 L1022.5 488.8 L1021.0 488.6 L1019.5 488.8 L1018.0 488.0 L1016.5 488.2 L1015.0 487.9 L1013.5 488.6 L1012.0 488.0 L1010.5 487.9 L1009.0 488.3 L1007.5 488.3 L1006.0 488.0 L1004.5 488.1 L1003.0 488.6 L1001.5 488.1 L1000.0 488.5 L998.5 488.3 L997.0 488.5 L995.5 488.4 L994.0 488.2 L992.5 488.4 L991.0 488.0 L989.5 487.9 L988.0 488.4 L986.5 488.7 L985.0 488.1 L983.5 488.2 L982.0 488.3 L980.5 488.1 L979.0 488.7 L977.5 488.1 L976.0 488.0 L974.5 488.5 L973.0 488.2 L971.5 487.9 L970.0 488.8 L968.5 488.0 L967.0 488.8 L965.5 488.3 L964.0 488.7 L962.5 488.2 L961.0 488.4 L959.5 488.5 L958.0 488.7Z" fill="#16248a" stroke="#0a0e30" stroke-width="0.8" shape-rendering="auto"/><rect x="961" y="520" width="154" height="1" fill="#3a6ad8"/><path d="M1114.0 519.7 L1115.5 519.8 L1117.0 520.1 L1118.5 519.8 L1120.0 519.8 L1121.5 519.8 L1123.0 520.1 L1124.5 519.9 L1126.0 519.9 L1127.5 520.0 L1129.0 519.9 L1129.0 521.6 L1127.5 521.6 L1126.0 521.7 L1124.5 521.5 L1123.0 521.7 L1121.5 521.4 L1120.0 521.4 L1118.5 521.7 L1117.0 521.3 L1115.5 521.2 L1114.0 521.3Z" fill="#0a0c28" stroke="#0a0c28" stroke-width="0.5" shape-rendering="auto"/><path d="M958.0 537.6 L959.5 537.5 L961.0 537.7 L962.5 537.8 L964.0 537.7 L965.5 537.7 L967.0 537.6 L968.5 537.8 L970.0 537.5 L971.5 537.5 L973.0 537.8 L974.5 537.6 L976.0 537.4 L977.5 537.8 L979.0 537.3 L980.5 537.7 L982.0 537.7 L983.5 537.4 L985.0 537.5 L986.5 537.5 L988.0 537.8 L989.5 537.4 L991.0 537.6 L992.5 537.8 L994.0 537.7 L995.5 537.6 L997.0 537.3 L998.5 537.4 L1000.0 537.8 L1001.5 537.6 L1003.0 537.6 L1004.5 537.5 L1006.0 537.4 L1007.5 537.4 L1009.0 537.8 L1010.5 537.4 L1012.0 537.8 L1013.5 537.6 L1015.0 537.7 L1016.5 537.6 L1018.0 537.7 L1019.5 537.7 L1021.0 537.5 L1022.5 537.7 L1024.0 537.8 L1025.5 537.5 L1027.0 537.5 L1028.5 537.6 L1030.0 537.4 L1031.5 537.4 L1033.0 537.7 L1034.5 537.3 L1036.0 537.6 L1037.5 537.7 L1039.0 537.5 L1040.5 537.4 L1042.0 537.6 L1043.5 537.7 L1045.0 537.5 L1046.5 537.7 L1048.0 537.4 L1049.5 537.7 L1051.0 537.4 L1052.5 537.7 L1054.0 537.4 L1055.5 537.7 L1057.0 537.7 L1058.5 537.5 L1060.0 537.6 L1061.5 537.3 L1063.0 537.7 L1064.5 537.7 L1066.0 537.3 L1067.5 537.4 L1069.0 537.7 L1070.5 537.7 L1072.0 537.6 L1073.5 537.6 L1075.0 537.5 L1076.5 537.5 L1078.0 537.7 L1079.5 537.6 L1081.0 537.3 L1082.5 537.5 L1084.0 537.6 L1085.5 537.4 L1087.0 537.4 L1088.5 537.4 L1090.0 537.5 L1091.5 537.6 L1093.0 537.8 L1094.5 537.4 L1096.0 537.5 L1097.5 537.6 L1099.0 537.5 L1100.5 537.5 L1102.0 537.7 L1103.5 537.4 L1105.0 537.6 L1106.5 537.8 L1108.0 537.7 L1109.5 537.3 L1111.0 537.7 L1112.5 537.5 L1114.0 537.5 L1115.5 537.4 L1117.0 537.6 L1118.5 537.7 L1120.0 537.6 L1121.5 537.7 L1123.0 537.6 L1124.5 537.7 L1126.0 537.8 L1127.5 537.6 L1129.0 537.6 L1129.0 539.3 L1127.5 539.5 L1126.0 539.4 L1124.5 539.4 L1123.0 539.2 L1121.5 539.7 L1120.0 539.6 L1118.5 539.5 L1117.0 539.7 L1115.5 539.5 L1114.0 539.5 L1112.5 539.6 L1111.0 539.5 L1109.5 539.5 L1108.0 539.6 L1106.5 539.5 L1105.0 539.7 L1103.5 539.4 L1102.0 539.5 L1100.5 539.7 L1099.0 539.4 L1097.5 539.4 L1096.0 539.3 L1094.5 539.6 L1093.0 539.4 L1091.5 539.5 L1090.0 539.4 L1088.5 539.5 L1087.0 539.6 L1085.5 539.6 L1084.0 539.3 L1082.5 539.6 L1081.0 539.4 L1079.5 539.6 L1078.0 539.5 L1076.5 539.4 L1075.0 539.5 L1073.5 539.6 L1072.0 539.2 L1070.5 539.3 L1069.0 539.5 L1067.5 539.4 L1066.0 539.6 L1064.5 539.4 L1063.0 539.7 L1061.5 539.6 L1060.0 539.3 L1058.5 539.3 L1057.0 539.4 L1055.5 539.3 L1054.0 539.6 L1052.5 539.4 L1051.0 539.3 L1049.5 539.4 L1048.0 539.5 L1046.5 539.4 L1045.0 539.6 L1043.5 539.6 L1042.0 539.4 L1040.5 539.5 L1039.0 539.6 L1037.5 539.4 L1036.0 539.6 L1034.5 539.5 L1033.0 539.3 L1031.5 539.2 L1030.0 539.2 L1028.5 539.4 L1027.0 539.4 L1025.5 539.6 L1024.0 539.6 L1022.5 539.5 L1021.0 539.4 L1019.5 539.3 L1018.0 539.7 L1016.5 539.6 L1015.0 539.4 L1013.5 539.6 L1012.0 539.4 L1010.5 539.7 L1009.0 539.3 L1007.5 539.3 L1006.0 539.2 L1004.5 539.3 L1003.0 539.6 L1001.5 539.6 L1000.0 539.4 L998.5 539.5 L997.0 539.5 L995.5 539.4 L994.0 539.6 L992.5 539.3 L991.0 539.4 L989.5 539.3 L988.0 539.2 L986.5 539.3 L985.0 539.6 L983.5 539.6 L982.0 539.2 L980.5 539.3 L979.0 539.7 L977.5 539.6 L976.0 539.6 L974.5 539.6 L973.0 539.5 L971.5 539.6 L970.0 539.5 L968.5 539.2 L967.0 539.3 L965.5 539.7 L964.0 539.2 L962.5 539.7 L961.0 539.5 L959.5 539.4 L958.0 539.6Z" fill="#0a0c28" stroke="#0a0c28" stroke-width="0.5" shape-rendering="auto"/><rect x="0" y="358" width="1129" height="11" fill="#20252c"/><rect x="0" y="359" width="1129" height="9" fill="#dcdcdc"/><rect x="0" y="360" width="1129" height="7" fill="#979899"/><path d="M16.5 360V367M33.5 360V367M50.5 360V367M67.5 360V367M84.5 360V367M101.5 360V367M118.5 360V367M136.5 360V367M153.5 360V367M170.5 360V367M187.5 360V367M204.5 360V367M221.5 360V367M238.5 360V367M255.5 360V367M272.5 360V367M289.5 360V367M306.5 360V367M323.5 360V367M340.5 360V367M357.5 360V367M374.5 360V367M391.5 360V367M408.5 360V367M425.5 360V367M442.5 360V367M459.5 360V367M476.5 360V367M493.5 360V367M510.5 360V367M528.5 360V367M545.5 360V367M562.5 360V367M579.5 360V367M596.5 360V367M613.5 360V367M630.5 360V367M647.5 360V367M664.5 360V367M681.5 360V367M698.5 360V367M715.5 360V367M732.5 360V367M749.5 360V367M766.5 360V367M783.5 360V367M800.5 360V367M817.5 360V367M834.5 360V367M851.5 360V367M868.5 360V367M885.5 360V367M902.5 360V367M919.5 360V367M937.5 360V367M954.5 360V367M971.5 360V367M988.5 360V367M1005.5 360V367M1022.5 360V367M1039.5 360V367M1056.5 360V367M1073.5 360V367M1090.5 360V367M1107.5 360V367M1124.5 360V367" stroke="#6c7078" stroke-width="1" fill="none"/><rect x="0" y="386" width="1129" height="11" fill="#20252c"/><rect x="0" y="387" width="1129" height="9" fill="#dcdcdc"/><rect x="0" y="388" width="1129" height="7" fill="#979899"/><path d="M16.5 388V395M33.5 388V395M50.5 388V395M67.5 388V395M84.5 388V395M101.5 388V395M118.5 388V395M136.5 388V395M153.5 388V395M170.5 388V395M187.5 388V395M204.5 388V395M221.5 388V395M238.5 388V395M255.5 388V395M272.5 388V395M289.5 388V395M306.5 388V395M323.5 388V395M340.5 388V395M357.5 388V395M374.5 388V395M391.5 388V395M408.5 388V395M425.5 388V395M442.5 388V395M459.5 388V395M476.5 388V395M493.5 388V395M510.5 388V395M528.5 388V395M545.5 388V395M562.5 388V395M579.5 388V395M596.5 388V395M613.5 388V395M630.5 388V395M647.5 388V395M664.5 388V395M681.5 388V395M698.5 388V395M715.5 388V395M732.5 388V395M749.5 388V395M766.5 388V395M783.5 388V395M800.5 388V395M817.5 388V395M834.5 388V395M851.5 388V395M868.5 388V395M885.5 388V395M902.5 388V395M919.5 388V395M937.5 388V395M954.5 388V395M971.5 388V395M988.5 388V395M1005.5 388V395M1022.5 388V395M1039.5 388V395M1056.5 388V395M1073.5 388V395M1090.5 388V395M1107.5 388V395M1124.5 388V395" stroke="#6c7078" stroke-width="1" fill="none"/><rect x="0" y="554" width="1129" height="36" fill="#7d7f82"/><rect x="0" y="559" width="500" height="1" fill="#8a8c8e"/><rect x="0" y="565" width="500" height="8" fill="#98999b"/><path d="M16.5 565V573M33.5 565V573M50.5 565V573M67.5 565V573M84.5 565V573M101.5 565V573M118.5 565V573M136.5 565V573M153.5 565V573M170.5 565V573M187.5 565V573M204.5 565V573M221.5 565V573M238.5 565V573M255.5 565V573M272.5 565V573M289.5 565V573M306.5 565V573M323.5 565V573M340.5 565V573M357.5 565V573M374.5 565V573M391.5 565V573M408.5 565V573M425.5 565V573M442.5 565V573M459.5 565V573M476.5 565V573M493.5 565V573" stroke="#6f737b" stroke-width="1" fill="none"/><rect x="0" y="577" width="500" height="8" fill="#98999b"/><path d="M16.5 577V585M33.5 577V585M50.5 577V585M67.5 577V585M84.5 577V585M101.5 577V585M118.5 577V585M136.5 577V585M153.5 577V585M170.5 577V585M187.5 577V585M204.5 577V585M221.5 577V585M238.5 577V585M255.5 577V585M272.5 577V585M289.5 577V585M306.5 577V585M323.5 577V585M340.5 577V585M357.5 577V585M374.5 577V585M391.5 577V585M408.5 577V585M425.5 577V585M442.5 577V585M459.5 577V585M476.5 577V585M493.5 577V585" stroke="#6f737b" stroke-width="1" fill="none"/><rect x="500" y="559" width="629" height="6" fill="#98999b"/><path d="M510.5 559V565M528.5 559V565M545.5 559V565M562.5 559V565M579.5 559V565M596.5 559V565M613.5 559V565M630.5 559V565M647.5 559V565M664.5 559V565M681.5 559V565M698.5 559V565M715.5 559V565M732.5 559V565M749.5 559V565M766.5 559V565M783.5 559V565M800.5 559V565M817.5 559V565M834.5 559V565M851.5 559V565M868.5 559V565M885.5 559V565M902.5 559V565M919.5 559V565M937.5 559V565M954.5 559V565M971.5 559V565M988.5 559V565M1005.5 559V565M1022.5 559V565M1039.5 559V565M1056.5 559V565M1073.5 559V565M1090.5 559V565M1107.5 559V565M1124.5 559V565" stroke="#6f737b" stroke-width="1" fill="none"/><rect x="500" y="570" width="629" height="3" fill="#98999b"/><path d="M510.5 570V573M528.5 570V573M545.5 570V573M562.5 570V573M579.5 570V573M596.5 570V573M613.5 570V573M630.5 570V573M647.5 570V573M664.5 570V573M681.5 570V573M698.5 570V573M715.5 570V573M732.5 570V573M749.5 570V573M766.5 570V573M783.5 570V573M800.5 570V573M817.5 570V573M834.5 570V573M851.5 570V573M868.5 570V573M885.5 570V573M902.5 570V573M919.5 570V573M937.5 570V573M954.5 570V573M971.5 570V573M988.5 570V573M1005.5 570V573M1022.5 570V573M1039.5 570V573M1056.5 570V573M1073.5 570V573M1090.5 570V573M1107.5 570V573M1124.5 570V573" stroke="#6f737b" stroke-width="1" fill="none"/><rect x="500" y="577" width="629" height="8" fill="#98999b"/><path d="M510.5 577V585M528.5 577V585M545.5 577V585M562.5 577V585M579.5 577V585M596.5 577V585M613.5 577V585M630.5 577V585M647.5 577V585M664.5 577V585M681.5 577V585M698.5 577V585M715.5 577V585M732.5 577V585M749.5 577V585M766.5 577V585M783.5 577V585M800.5 577V585M817.5 577V585M834.5 577V585M851.5 577V585M868.5 577V585M885.5 577V585M902.5 577V585M919.5 577V585M937.5 577V585M954.5 577V585M971.5 577V585M988.5 577V585M1005.5 577V585M1022.5 577V585M1039.5 577V585M1056.5 577V585M1073.5 577V585M1090.5 577V585M1107.5 577V585M1124.5 577V585" stroke="#6f737b" stroke-width="1" fill="none"/><rect x="0" y="0" width="1129" height="14" fill="#1a1b1d"/><rect x="0" y="14" width="1129" height="4" fill="#09090b"/><rect x="0" y="18" width="1129" height="2" fill="#5c5e60"/><rect x="0" y="20" width="1129" height="4" fill="#25292c"/><rect x="0" y="23" width="1129" height="1" fill="#202428"/><rect x="0" y="24" width="1129" height="25" fill="#8b8d90"/><path d="M50.5 24V48M118.5 24V48M187.5 24V48M255.5 24V48M323.5 24V48M391.5 24V48M459.5 24V48M528.5 24V48M596.5 24V48M664.5 24V48M732.5 24V48M800.5 24V48M868.5 24V48M937.5 24V48M1005.5 24V48M1073.5 24V48" stroke="#0a0a0c" stroke-width="1" fill="none"/><rect x="0" y="36" width="1" height="1" fill="#2a6ab8"/><rect x="652" y="24" width="4" height="776" fill="#2a3038"/><rect x="652" y="24" width="1" height="776" fill="#e6e6e6"/><rect x="655" y="24" width="1" height="776" fill="#e6e6e6"/></svg>
<span class="rl" style="left:55px">38</span><span class="rl" style="left:123px">39</span><span class="rl" style="left:192px">40</span><span class="rl" style="left:260px">41</span><span class="rl" style="left:328px">42</span><span class="rl" style="left:396px">43</span><span class="rl" style="left:464px">44</span><span class="rl" style="left:533px">45</span><span class="rl" style="left:601px">46</span><span class="rl" style="left:669px">47</span><span class="rl" style="left:737px">48</span><span class="rl" style="left:805px">49</span><span class="rl" style="left:873px">50</span><span class="rl" style="left:942px">51</span><span class="rl" style="left:1010px">52</span><span class="rl" style="left:1078px">53</span>
<span class="cliptxt" style="left:961px;top:431px">ience Guitar 2 1.1 100%-02</span>
<span class="cliptxt" style="left:961px;top:513px">ience Guitar 2 1.1 100%-02-01</span>
<div style="position:absolute;left:961px;top:520px;width:154px;height:1px;background:rgba(40,80,190,.55)"></div>
<div id="dlg">
<div class="tb"></div>
<svg class="logo" style="left:1px;top:3px" width="23" height="23" viewBox="0 0 23 23"><defs><linearGradient id="lg" x1="0" y1="0" x2="0" y2="1"><stop offset="0" stop-color="#166bc0"/><stop offset="0.42" stop-color="#1f5dab"/><stop offset="0.56" stop-color="#274f8e"/><stop offset="1" stop-color="#19326e"/></linearGradient></defs><rect width="23" height="23" rx="1.5" fill="url(#lg)"/><path d="M12 3.2L3.9 11.5L12 19.8L15 17.3L9.6 11.5L15 5.7Z" fill="#fff"/><circle cx="15.7" cy="11.3" r="2.4" fill="#fff"/></svg>
<span class="title">音频连接 - 外部 FX</span>
<svg class="logo" style="left:700px;top:5px" width="120" height="20" viewBox="0 0 120 20" fill="none" stroke="#757575" stroke-width="1"><path d="M8 9.5H18"/><rect x="53.5" y="4.5" width="9" height="9" rx="1"/><path d="M99 4L109 14M109 4L99 14"/></svg>
<div id="panel"></div>
<svg class="logo" style="left:215px;top:30px" width="112" height="32" viewBox="215 30 112 32"><path d="M221 59V57Q228 57 228 52V38Q228 35 231 35H311Q314 35 314 38V52Q314 57 321 57V59Z" fill="#25282b"/><path d="M220 57H222Q228 57 228 52V38Q228 35 231 35H311Q314 35 314 38V52Q314 57 320 57H322" fill="none" stroke="#5f6265" stroke-width="2"/></svg>
<span class="tab" style="left:26px">输入</span>
<span class="tab" style="left:94px">输出</span>
<span class="tab" style="left:163px">编组/FX</span>
<span class="tab" style="left:250px">外部 FX</span>
<span class="tab" style="left:336px">外部乐器</span>
<span class="tab" style="left:428px;letter-spacing:-0.12px">Control Room</span>
<div class="btn l" style="left:13px;width:175px">添加外部 FX</div>
<div class="btn d" style="left:195px;width:175px">收藏夹</div>
<div class="btn d" style="left:614px;width:100px;border-radius:3px 0 0 3px">展开全部</div>
<div class="btn d" style="left:713px;width:101px;border-radius:0 3px 3px 0">折叠全部</div>
<div class="thead" style="left:14px;top:96px;width:798px;height:17px"></div>
<span class="th" style="left:20px;top:100px">总线名称</span>
<span class="th" style="left:161px;top:100px">扬声器</span>
<span class="th" style="left:241px;top:100px">音频设备</span>
<span class="th" style="left:371px;top:100px">设备端口</span>
<span class="th" style="left:501px;top:100px">延迟</span>
<span class="th" style="left:601px;top:100px">发送增益</span>
<span class="th" style="left:681px;top:100px">返回增益</span>
<span class="th" style="left:761px;top:100px">MIDI 设备</span>
<div class="vsep" style="left:155px;top:113px;height:423px"></div>
<div class="hvsep" style="left:154px;top:97px"></div>
<div class="vsep" style="left:235px;top:113px;height:423px"></div>
<div class="hvsep" style="left:234px;top:97px"></div>
<div class="vsep" style="left:365px;top:113px;height:423px"></div>
<div class="hvsep" style="left:364px;top:97px"></div>
<div class="vsep" style="left:495px;top:113px;height:423px"></div>
<div class="hvsep" style="left:494px;top:97px"></div>
<div class="vsep" style="left:595px;top:113px;height:423px"></div>
<div class="hvsep" style="left:594px;top:97px"></div>
<div class="vsep" style="left:675px;top:113px;height:423px"></div>
<div class="hvsep" style="left:674px;top:97px"></div>
<div class="vsep" style="left:755px;top:113px;height:423px"></div>
<div class="hvsep" style="left:754px;top:97px"></div>
<div class="hsep" style="left:14px;top:133px;width:798px"></div>
<span class="tri" style="left:19px;top:119px"></span>
<span class="nm" style="left:39px;top:114px">Pro VLA II</span>
<span class="spk" style="left:161px;top:114.5px">立体声/立体声</span>
<span class="cell" style="left:497px;top:115px;width:97px">1.46 ms (70)</span>
<span class="cell" style="left:597px;top:115px;width:77px">-6.00 dB</span>
<span class="cell" style="left:677px;top:115px;width:77px">0.30 dB</span>
<span class="cell cj" style="left:757px;top:115px;width:55px">无链接</span>
<div class="hsep" style="left:14px;top:153px;width:798px"></div>
<span class="tri" style="left:19px;top:139px"></span>
<span class="nm" style="left:39px;top:134px">KPA</span>
<span class="spk" style="left:161px;top:134.5px">单声道/单声道</span>
<span class="cell" style="left:497px;top:135px;width:97px">0.00 ms (0)</span>
<span class="cell" style="left:597px;top:135px;width:77px">-6.00 dB</span>
<span class="cell" style="left:677px;top:135px;width:77px">0.00 dB</span>
<span class="cell cj" style="left:757px;top:135px;width:55px">无链接</span>
<div class="hsep" style="left:14px;top:173px;width:798px"></div>
<span class="tri" style="left:19px;top:159px"></span>
<span class="nm" style="left:39px;top:154px">Alter Ego X4 Stereo</span>
<span class="spk" style="left:161px;top:154.5px">立体声/立体声</span>
<span class="cell" style="left:497px;top:155px;width:97px">1.48 ms (70)</span>
<span class="cell" style="left:597px;top:155px;width:77px">0.00 dB</span>
<span class="cell" style="left:677px;top:155px;width:77px">6.02 dB</span>
<span class="cell cj" style="left:757px;top:155px;width:55px">无链接</span>
<div class="hsep" style="left:14px;top:193px;width:798px"></div>
<span class="tri" style="left:19px;top:179px"></span>
<span class="nm" style="left:39px;top:174px">Neve Rep</span>
<span class="spk" style="left:161px;top:174.5px">立体声/立体声</span>
<span class="cell" style="left:497px;top:175px;width:97px">1.46 ms (70)</span>
<span class="cell" style="left:597px;top:175px;width:77px">-6.00 dB</span>
<span class="cell" style="left:677px;top:175px;width:77px">1.80 dB</span>
<span class="cell cj" style="left:757px;top:175px;width:55px">无链接</span>
<div class="hsep" style="left:14px;top:213px;width:798px"></div>
<span class="tri" style="left:19px;top:199px"></span>
<span class="nm" style="left:39px;top:194px">Alter Ego</span>
<span class="spk" style="left:161px;top:194.5px">立体声/立体声</span>
<span class="cell" style="left:497px;top:195px;width:97px">0.00 ms (0)</span>
<span class="cell" style="left:597px;top:195px;width:77px">0.00 dB</span>
<span class="cell" style="left:677px;top:195px;width:77px">0.00 dB</span>
<span class="cell cj" style="left:757px;top:195px;width:55px">无链接</span>
<div id="tframe"></div>
<div id="sb"></div><div id="sbl"></div>
</div>
<div id="sd">
<div class="tb"></div>
<svg class="logo" style="left:8px;top:6px" width="16" height="16" viewBox="0 0 23 23"><defs><linearGradient id="lg2" x1="0" y1="0" x2="0" y2="1"><stop offset="0" stop-color="#1d5598"/><stop offset="0.5" stop-color="#234b87"/><stop offset="1" stop-color="#1a356c"/></linearGradient></defs><rect width="23" height="23" rx="2" fill="url(#lg2)"/><path d="M12 3.2L3.9 11.5L12 19.8L15 17.3L9.6 11.5L15 5.7Z" fill="#fff"/><circle cx="15.7" cy="11.3" r="2.4" fill="#fff"/></svg>
<span class="title">添加外部 FX</span>
<svg class="logo" style="left:238px;top:9px" width="11" height="11" viewBox="0 0 11 11" fill="none" stroke="#858585" stroke-width="1"><path d="M0.5 0.5L10.5 10.5M10.5 0.5L0.5 10.5"/></svg>
<div id="grp"></div>
<div class="fld" style="top:44px;text-align:center">外部效果</div><span class="lab" style="top:48px">名称</span>
<div class="fld" style="top:74px;padding-left:6px">立体声<span class="dd"></span></div><span class="lab" style="top:78px">发送配置</span>
<span class="lr" style="top:98px">L R</span>
<div class="fld" style="top:114px;padding-left:6px">立体声<span class="dd"></span></div><span class="lab" style="top:118px">返回配置</span>
<span class="lr" style="top:138px">L R</span>
<div class="wb" style="left:15px;top:166px;width:228px;height:16px;line-height:16px;word-spacing:-1px;letter-spacing:-0.2px">联合 MIDI 设备</div>
<div class="wb" style="left:77px;top:201px;width:78px;height:21px;line-height:19px;border:1px solid #2a6cb4">确定</div>
<div class="wb" style="left:166px;top:202px;width:77px;height:19px;line-height:19px">取消</div>
</div>
</body></html>
